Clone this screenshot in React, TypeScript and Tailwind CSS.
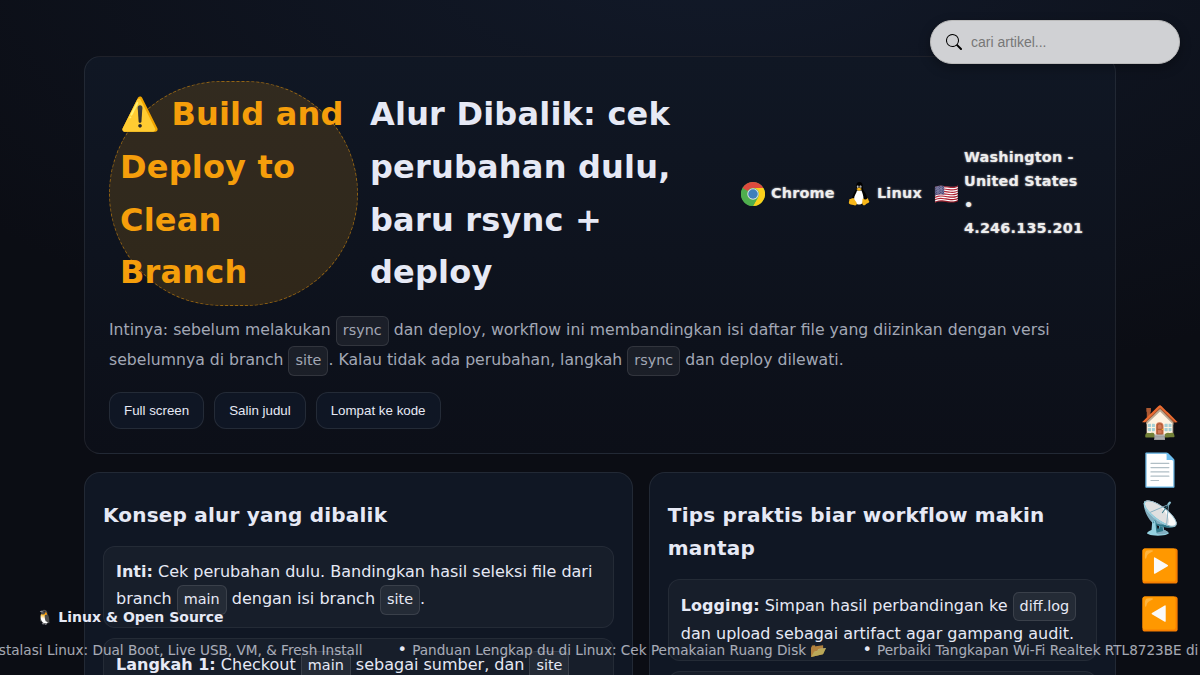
import React from "react";

function Code({ children }: { children: React.ReactNode }) {
  return (
    <code className="inline-block rounded-[6px] border border-white/10 bg-white/[0.06] px-[6px] py-[2px] font-['DejaVu_Sans',sans-serif] text-[14.4px]">
      {children}
    </code>
  );
}

function Item({ children }: { children: React.ReactNode }) {
  return (
    <div className="mb-[10px] rounded-[12px] border border-white/[0.06] bg-white/[0.03] p-3">{children}</div>
  );
}

function Chrome() {
  return (
    <svg viewBox="0 0 48 48" className="size-6 shrink-0">
      <circle cx="24" cy="24" r="24" fill="#4fae4e" />
      <path d="M3.2 12A24 24 0 0 1 44.8 12H24A12 12 0 0 0 13.6 18Z" fill="#dd4b3e" />
      <path d="M44.8 12A24 24 0 0 1 24 48L34.4 30A12 12 0 0 0 24 12Z" fill="#fbd01b" />
      <path d="M24 48A24 24 0 0 1 3.2 12L13.6 30A12 12 0 0 0 34.4 30Z" fill="#4fae4e" />
      <circle cx="24" cy="24" r="11.5" fill="#d8e0e4" />
      <circle cx="24" cy="24" r="9.5" fill="#3f7fbd" />
    </svg>
  );
}

function Tux() {
  return (
    <svg viewBox="0 0 48 48" className="size-6 shrink-0">
      <path d="M25 0c-5 0-7 4-6.500 9 .3 5-1 7-4 12-3 5-5 10-4 16l10 8h10l9-8c2-6-1-12-4-17-3-4-4-6-4-11 0-6-2-9-6.500-9Z" fill="#000" />
      <path d="M20 17c-1 5-6 10-6 18 0 5 4 10 10 10s9-3 9-11c0-7-2-12-4-17Z" fill="#fff" />
      <ellipse cx="21.500" cy="9.500" rx="1.800" ry="2.500" fill="#ddd" />
      <ellipse cx="27" cy="9.500" rx="2" ry="2.500" fill="#ddd" />
      <circle cx="22" cy="10" r="1" />
      <circle cx="26.500" cy="10" r="1" />
      <path d="M18.500 14l5.500-3 6 3-6 4Z" fill="#f8b719" />
      <path d="M5 34c4 0 6-3 8-2l6 9c2 5-2 7-6 5-4-1-8-1-9-3-1-3 1-5 1-9Z" fill="#f8b719" />
      <path d="M31 34c1-3 3 1 6 1s3-4 5-2c1 3 1 4 2 5 2 2-1 4-4 5-3 2-5 5-8 3-3-3-1-7-1-12Z" fill="#f8b719" />
    </svg>
  );
}

const SIDE = ["🏠", "📄", "📡", "▶️", "◀️"];
const BUTTONS = ["Full screen", "Salin judul", "Lompat ke kode"];

export default function App() {
  return (
    <div className="relative h-[675px] w-[1200px] overflow-hidden bg-[#0b0d14] bg-[radial-gradient(1200px_600px_at_60%_-10%,#121a2a_0%,#0b0d14_78%)] font-['DejaVu_Sans','Noto_Color_Emoji',sans-serif] text-[16px] leading-[1.65] text-[#e6e9f5]">
      <main className="mx-auto flex w-[1032px] flex-col gap-[18px] pt-[56px]">
        <header className="h-[397.6px] rounded-[16px] border border-white/[0.08] bg-[linear-gradient(180deg,#101724,#0c0f18)] p-6">
          <div className="flex items-center">
            <h1 className="flex gap-3 text-[32px] font-bold tracking-[0.2px]">
              <span className="w-[249px] shrink-0 rounded-[999px] border border-dashed border-[#f59e0b]/50 bg-[#f59e0b]/[0.15] px-[10px] py-[6px] whitespace-nowrap text-[#f59e0b]">
                ⚠️ Build and<br />Deploy to<br />Clean<br />Branch
              </span>
              <span className="w-[359px] py-[7px] whitespace-nowrap">
                Alur Dibalik: cek<br />perubahan dulu,<br />baru rsync +<br />deploy
              </span>
            </h1>
            <div className="ml-3 flex items-center text-[14.4px] font-bold tracking-[0.2px] text-[#eee] [text-shadow:0_0_2px_#bbb]">
              <Chrome />
              <span className="ml-[6px] w-[76px]">Chrome</span>
              <Tux />
              <span className="ml-[6px] w-[57px]">Linux</span>
              <span className="relative top-px w-[30px] text-[20px] font-normal [text-shadow:none]">🇺🇸</span>
              <span className="whitespace-nowrap">Washington -<br />United States<br />•<br />4.246.135.201</span>
            </div>
          </div>
          <p className="mt-[10px] text-[15.68px] text-[#a2a7b5]">
            Intinya: sebelum melakukan <Code>rsync</Code> dan deploy, workflow ini membandingkan isi daftar file yang diizinkan dengan versi<br />
            sebelumnya di branch <Code>site</Code>. Kalau tidak ada perubahan, langkah <Code>rsync</Code> dan deploy dilewati.
          </p>
          <div className="mt-4 flex gap-[10px]">
            {BUTTONS.map((b) => (
              <button key={b} className="h-[37px] rounded-[12px] border border-white/[0.09] bg-[#0f1624] px-[14px] font-['Liberation_Sans',sans-serif] text-[13.333px] leading-[15px]">{b}</button>
            ))}
          </div>
        </header>
        <div className="flex items-start gap-4">
          <section className="h-[400px] w-[548.8px] rounded-[16px] border border-white/[0.08] bg-[#101724] p-[18px]">
            <h2 className="mt-2 mb-[14px] text-[20px] font-bold tracking-[0.2px]">Konsep alur yang dibalik</h2>
            <Item>
              <b>Inti:</b> Cek perubahan dulu. Bandingkan hasil seleksi file dari<br />
              branch <Code>main</Code> dengan isi branch <Code>site</Code>.
            </Item>
            <Item>
              <b>Langkah 1:</b> Checkout <Code>main</Code> sebagai sumber, dan <Code>site</Code>
            </Item>
          </section>
          <section className="h-[400px] w-[467.2px] rounded-[16px] border border-white/[0.08] bg-[#101724] p-[18px]">
            <h2 className="mt-2 mb-[14px] text-[20px] font-bold tracking-[0.2px]">Tips praktis biar workflow makin mantap</h2>
            <Item>
              <b>Logging:</b> Simpan hasil perbandingan ke <Code>diff.log</Code><br />
              dan upload sebagai artifact agar gampang audit.
            </Item>
            <Item>&nbsp;</Item>
          </section>
        </div>
      </main>

      <label className="absolute top-5 left-[930px] flex h-11 w-[250px] items-center rounded-full border border-[#bbb] bg-[#d0d1d4] pl-[15px] shadow-[0_4px_12px_rgba(0,0,0,0.3)]">
        <svg viewBox="0 0 16 16" className="size-4" fill="#000">
          <path d="M11.742 10.344a6.500 6.500 0 1 0-1.397 1.398h-.001q.044.06.098.115l3.850 3.850a1 1 0 0 0 1.415-1.414l-3.850-3.850a1 1 0 0 0-.115-.1zM12 6.500a5.500 5.500 0 1 1-11 0 5.500 5.500 0 0 1 11 0" />
        </svg>
        <input placeholder="cari artikel..." className="ml-[9px] w-[190px] bg-transparent pt-[2px] font-['Liberation_Sans',sans-serif] text-[14px] outline-none placeholder:text-[#777]" />
      </label>

      <nav className="absolute top-[404px] left-[1140px] flex w-10 flex-col items-center gap-3 text-[32px] leading-[36px]">
        {SIDE.map((e) => <span key={e} className="h-9">{e}</span>)}
      </nav>

      <div className="absolute top-[606px] left-[36px] text-[14px] font-bold whitespace-pre">🐧 Linux &amp; Open Source</div>
      <div className="absolute top-[637px] left-0 h-7 w-full whitespace-nowrap">
        <span className="absolute right-[837.5px]">• <span className="text-[13.6px] opacity-70">Panduan Instalasi Linux: Dual Boot, Live USB, VM, &amp; Fresh Install</span></span>
        <span className="absolute left-[397.6px]">• <span className="text-[13.6px] opacity-70">Panduan Lengkap du di Linux: Cek Pemakaian Ruang Disk 📂</span></span>
        <span className="absolute left-[862.5px]">• <span className="text-[13.6px] opacity-70">Perbaiki Tangkapan Wi-Fi Realtek RTL8723BE di Linux</span></span>
      </div>
    </div>
  );
}
